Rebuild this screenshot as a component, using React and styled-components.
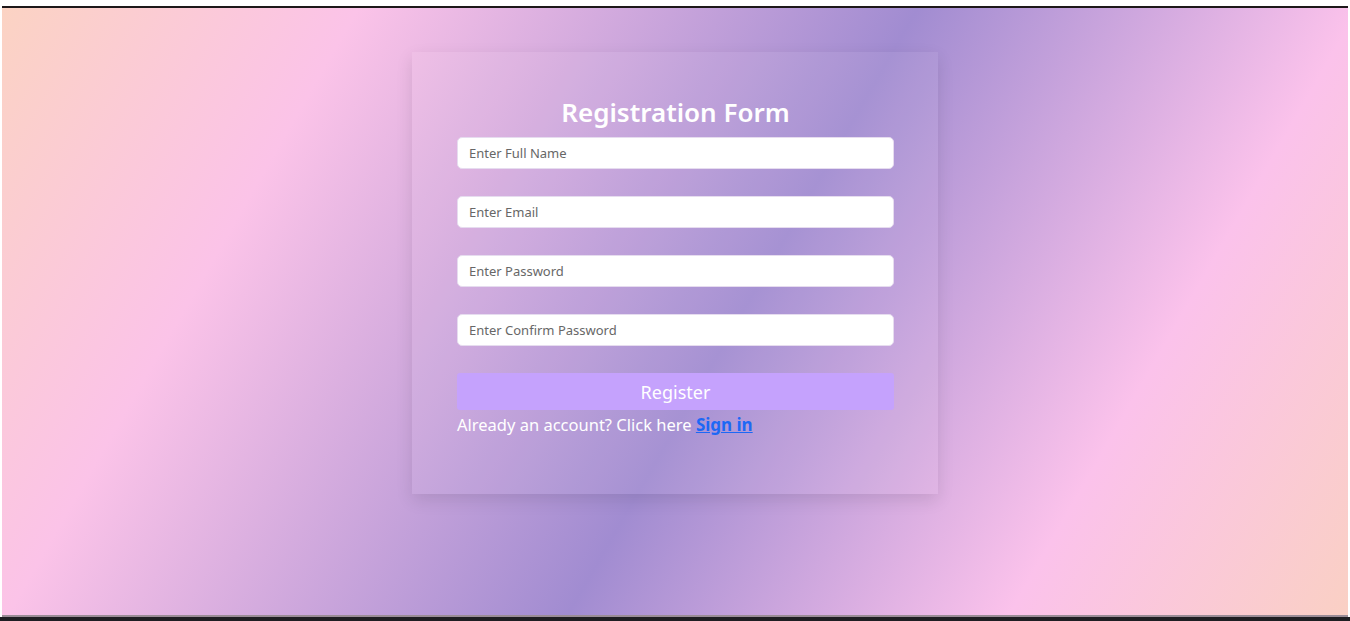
import React from 'react';
import styled, { createGlobalStyle } from 'styled-components';

const GlobalStyle = createGlobalStyle`
  html, body {
    margin: 0;
    padding: 0;
    background: #ffffff;
  }
  * {
    box-sizing: border-box;
  }
`;

const Page = styled.div`
  padding: 6px 2px 0;
  background: #ffffff;
  border-bottom: 4px solid #1f1e22;
  font-family: 'Noto Sans', 'Open Sans', sans-serif;
`;

const Screen = styled.main`
  height: 611px;
  border-top: 2px solid #1d1819;
  border-bottom: 2px solid #9a8c96;
  background: linear-gradient(
    120deg,
    #fbd3c3 0%,
    #fbc3e8 21%,
    #a18cd1 54%,
    #fbc2eb 80%,
    #fad0c4 100%
  );
  padding-top: 44px;
`;

const Card = styled.form`
  width: 526px;
  margin: 0 auto;
  padding: 41px 44px 58px 45px;
  background: rgba(255, 255, 255, 0.06);
  box-shadow: 0 6px 16px rgba(0, 0, 0, 0.1);
  display: flex;
  flex-direction: column;
`;

const Title = styled.h2`
  margin: 0 0 6px;
  font-size: 26px;
  line-height: 38px;
  font-weight: 600;
  color: #ffffff;
  text-align: center;
`;

const Field = styled.input`
  height: 32px;
  width: 100%;
  margin-bottom: 27px;
  padding: 0 11px;
  border: 1px solid #e6dcef;
  border-radius: 5px;
  background: #ffffff;
  font-family: inherit;
  font-size: 13px;
  color: #333;
  outline: none;

  &::placeholder {
    color: #676767;
  }
`;

const SubmitButton = styled.button`
  height: 37px;
  width: 100%;
  border: none;
  border-radius: 3px;
  background: #c5a2fd;
  color: #ffffff;
  font-family: inherit;
  font-size: 18px;
  cursor: pointer;
`;

const Hint = styled.p`
  margin: 4px 0 0;
  font-size: 16.5px;
  line-height: 22px;
  color: #ffffff;
`;

const SignInLink = styled.a`
  color: #1d68f5;
  font-size: 17px;
  font-weight: 700;
  text-decoration: underline;
`;

export default function App() {
  return (
    <>
      <GlobalStyle />
      <Page>
        <Screen>
          <Card onSubmit={(e) => e.preventDefault()}>
            <Title>Registration Form</Title>
            <Field type="text" placeholder="Enter Full Name" />
            <Field type="email" placeholder="Enter Email" />
            <Field type="password" placeholder="Enter Password" />
            <Field type="password" placeholder="Enter Confirm Password" />
            <SubmitButton type="submit">Register</SubmitButton>
            <Hint>
              Already an account? Click here <SignInLink href="#">Sign in</SignInLink>
            </Hint>
          </Card>
        </Screen>
      </Page>
    </>
  );
}
